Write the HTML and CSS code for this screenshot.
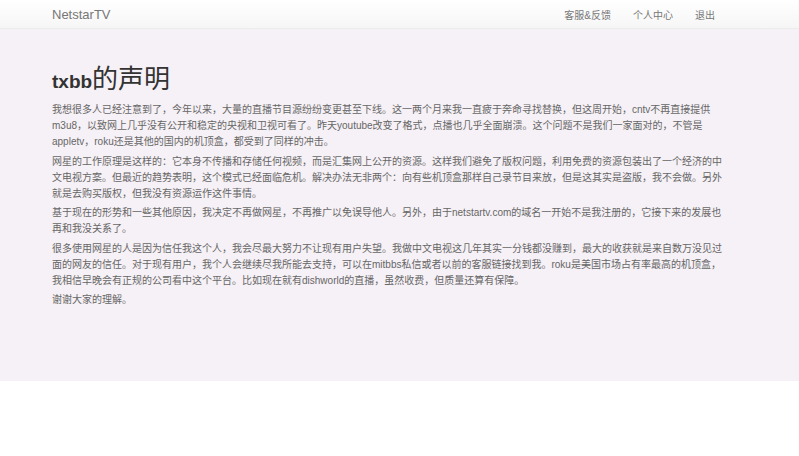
FILE: index.html
```html
<!DOCTYPE html>
<html lang="zh">
<head>
    <meta charset="UTF-8">
    <title>NetstarTV</title>
    <meta name="viewport" content="width=device-width, initial-scale=1.0">
    <link rel="stylesheet" href="styles.css">
</head>
<body>

    <!-- Navigation -->
    <header class="navbar">
        <div class="container navbar-inner">
            <a class="brand" href="#">NetstarTV</a>
            <nav class="nav">
                <a href="#">客服&amp;反馈</a>
                <a href="#">个人中心</a>
                <a href="#">退出</a>
            </nav>
        </div>
    </header>

    <!-- Notice -->
    <div class="jumbotron">
        <div class="container">
            <h1><span class="latin">txbb</span>的声明</h1>
            <p>我想很多人已经注意到了，今年以来，大量的直播节目源纷纷变更甚至下线。这一两个月来我一直疲于奔命寻找替换，但这周开始，cntv不再直接提供m3u8，以致网上几乎没有公开和稳定的央视和卫视可看了。昨天youtube改变了格式，点播也几乎全面崩溃。这个问题不是我们一家面对的，不管是appletv，roku还是其他的国内的机顶盒，都受到了同样的冲击。</p>
            <p>网星的工作原理是这样的：它本身不传播和存储任何视频，而是汇集网上公开的资源。这样我们避免了版权问题，利用免费的资源包装出了一个经济的中文电视方案。但最近的趋势表明，这个模式已经面临危机。解决办法无非两个：向有些机顶盒那样自己录节目来放，但是这其实是盗版，我不会做。另外就是去购买版权，但我没有资源运作这件事情。</p>
            <p>基于现在的形势和一些其他原因，我决定不再做网星，不再推广以免误导他人。另外，由于netstartv.com的域名一开始不是我注册的，它接下来的发展也再和我没关系了。</p>
            <p>很多使用网星的人是因为信任我这个人，我会尽最大努力不让现有用户失望。我做中文电视这几年其实一分钱都没赚到，最大的收获就是来自数万没见过面的网友的信任。对于现有用户，我个人会继续尽我所能去支持，可以在mitbbs私信或者以前的客服链接找到我。roku是美国市场占有率最高的机顶盒，我相信早晚会有正规的公司看中这个平台。比如现在就有dishworld的直播，虽然收费，但质量还算有保障。</p>
            <p>谢谢大家的理解。</p>
        </div>
    </div>

</body>
</html>
```

FILE: styles.css
```css
body {
    font-family: "Liberation Sans", "Noto Sans CJK SC", sans-serif;
    margin: 0;
    padding: 0;
    background-color: #fff;
}
a {
    text-decoration: none;
}
.container {
    width: 676px;
    margin-left: 52px;
}
.navbar {
    height: 28px;
    background: linear-gradient(to bottom, #fff 0%, #f6f6f6 100%);
    border-bottom: 1px solid #ececec;
}
.navbar-inner {
    display: flex;
    justify-content: space-between;
    align-items: center;
    height: 28px;
}
.brand {
    font-size: 13px;
    color: #777;
}
.nav {
    display: flex;
    margin-right: 2px;
}
.nav a {
    padding: 0 11px;
    font-size: 10px;
    color: #777;
}
.jumbotron {
    background-color: #f6f1f6;
    padding: 33px 0 69px;
}
h1 {
    margin: 0 0 3px;
    font-size: 26px;
    line-height: 34px;
    font-weight: normal;
    color: #333;
}
h1 .latin {
    font-size: 19px;
    font-weight: bold;
}
p {
    margin: 0 0 3.5px;
    font-size: 10px;
    line-height: 16px;
    color: #666;
}
```
